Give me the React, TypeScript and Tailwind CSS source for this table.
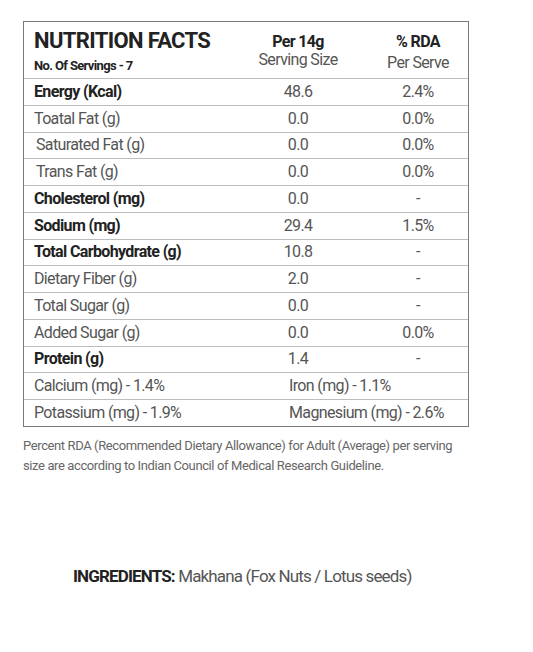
import React from "react";

type Row = { label: string; value: string; rda: string; bold?: boolean; indent?: boolean };

const rows: Row[] = [
  { label: "Energy (Kcal)", value: "48.6", rda: "2.4%", bold: true },
  { label: "Toatal Fat (g)", value: "0.0", rda: "0.0%" },
  { label: "Saturated Fat (g)", value: "0.0", rda: "0.0%", indent: true },
  { label: "Trans Fat (g)", value: "0.0", rda: "0.0%", indent: true },
  { label: "Cholesterol (mg)", value: "0.0", rda: "-", bold: true },
  { label: "Sodium (mg)", value: "29.4", rda: "1.5%", bold: true },
  { label: "Total Carbohydrate (g)", value: "10.8", rda: "-", bold: true },
  { label: "Dietary Fiber (g)", value: "2.0", rda: "-" },
  { label: "Total Sugar (g)", value: "0.0", rda: "-" },
  { label: "Added Sugar (g)", value: "0.0", rda: "0.0%" },
  { label: "Protein (g)", value: "1.4", rda: "-", bold: true },
];

const App = () => {
  return (
    <main
      className="w-[533px] h-[652px] bg-white pt-[21px]"
      style={{ fontFamily: "Roboto, 'Noto Sans', sans-serif" }}
    >
      {/* Nutrition table */}
      <div className="ml-[23px] w-[446px] border border-[#7a7a7a] tracking-[-0.04em]">
        <div className="grid grid-cols-[204px_140px_100px] h-[57px] border-b border-[#bdbdbd]">
          <div className="pl-[10px] pt-[5px]">
            <div className="text-[22px] leading-[28px] font-bold text-[#222]">NUTRITION FACTS</div>
            <div className="text-[13px] leading-[16px] font-bold text-[#222] mt-[3px]">No. Of Servings - 7</div>
          </div>
          <div className="text-center pt-[11px]">
            <div className="text-[16px] leading-[17px] font-bold text-[#222]">Per 14g</div>
            <div className="text-[16px] leading-[18px] text-[#555] mt-[1px]">Serving Size</div>
          </div>
          <div className="text-center pt-[11px]">
            <div className="text-[16px] leading-[17px] font-bold text-[#222]">% RDA</div>
            <div className="text-[16px] leading-[18px] text-[#555] mt-[4px]">Per Serve</div>
          </div>
        </div>

        {rows.map((r) => (
          <div
            key={r.label}
            className="grid grid-cols-[204px_140px_100px] h-[26.75px] items-center border-b border-[#bdbdbd] text-[16px]"
          >
            <div
              className={
                (r.indent ? "pl-[12px] " : "pl-[10px] ") +
                (r.bold ? "font-bold text-[#222]" : "text-[#555]")
              }
            >
              {r.label}
            </div>
            <div className="text-center text-[#555]">{r.value}</div>
            <div className="text-center text-[#555]">{r.rda}</div>
          </div>
        ))}

        <div className="grid grid-cols-[265px_179px] h-[26.75px] items-center border-b border-[#bdbdbd] text-[16px] text-[#555]">
          <div className="pl-[10px]">Calcium (mg) - 1.4%</div>
          <div>Iron (mg) - 1.1%</div>
        </div>
        <div className="grid grid-cols-[265px_179px] h-[26px] items-center text-[16px] text-[#555]">
          <div className="pl-[10px]">Potassium (mg) - 1.9%</div>
          <div>Magnesium (mg) - 2.6%</div>
        </div>
      </div>

      <p className="ml-[23px] mt-[9px] w-[445px] text-[13px] leading-[20px] text-[#666] tracking-[-0.03em]">
        Percent RDA (Recommended Dietary Allowance) for Adult (Average) per serving size are according to Indian Council of Medical Research Guideline.
      </p>

      <p className="ml-[73px] mt-[88px] text-[17px] text-[#555] tracking-[-0.05em]">
        <span className="font-bold text-[#222]">INGREDIENTS:</span> Makhana (Fox Nuts / Lotus seeds)
      </p>
    </main>
  );
};

export default App;
